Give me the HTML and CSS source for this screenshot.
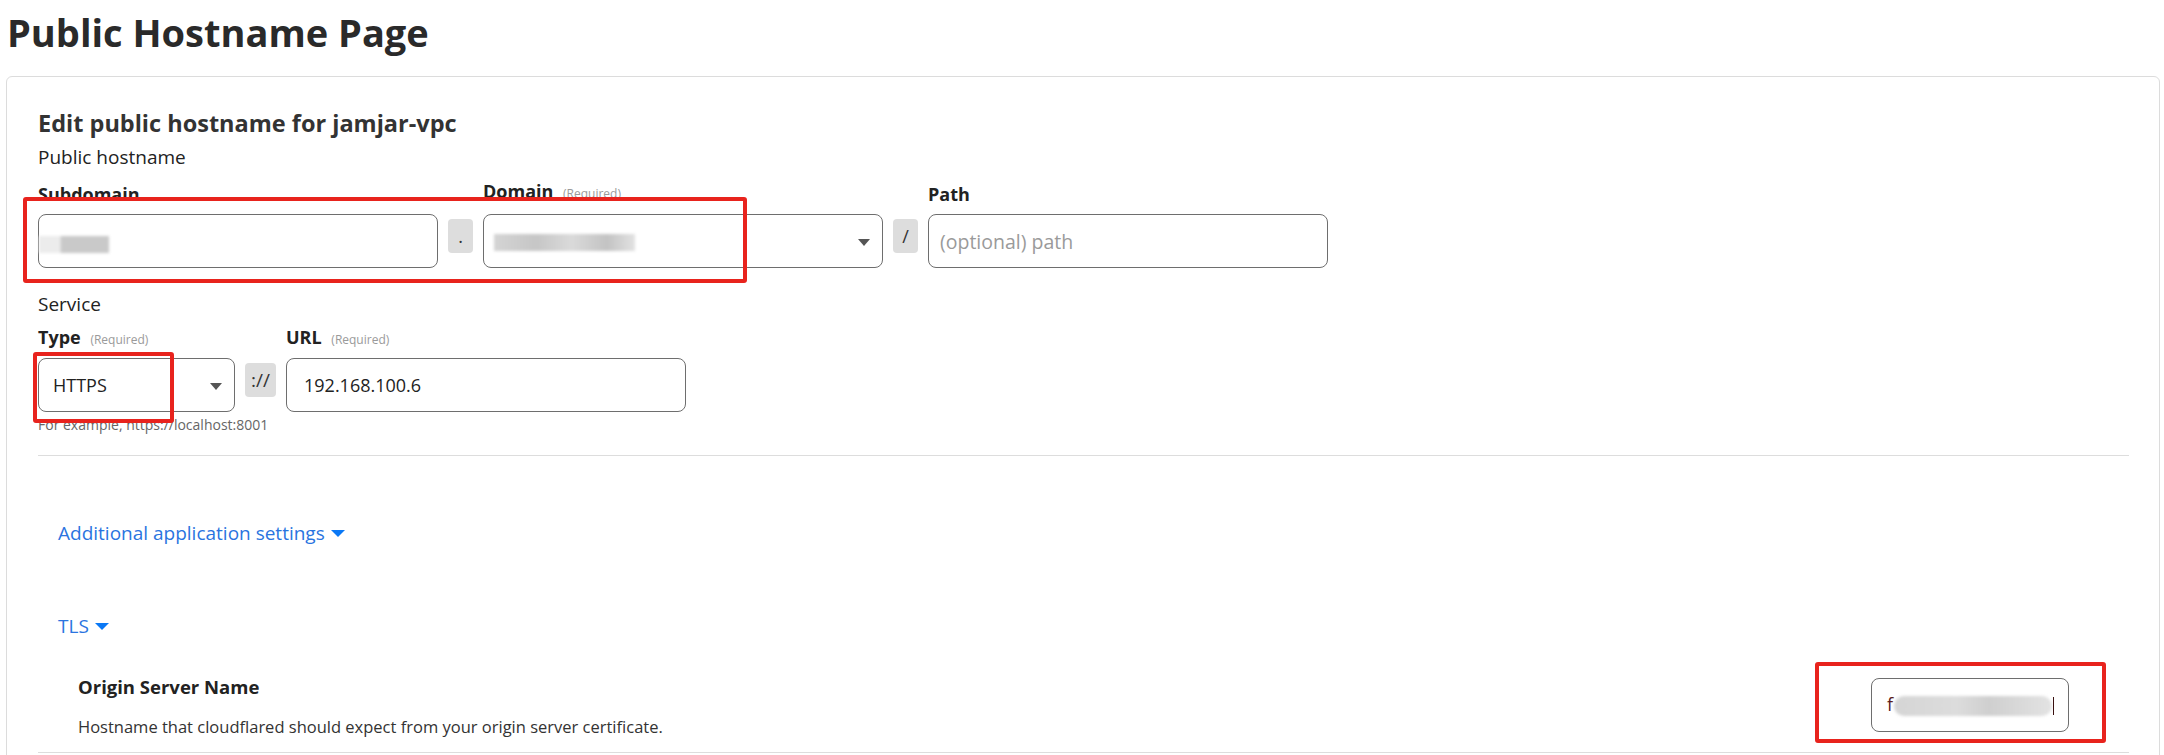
FILE: index.html
```html
<!DOCTYPE html>
<html lang="en">
<head>
<meta charset="utf-8">
<title>Public Hostname Page</title>
<link rel="stylesheet" href="styles.css">
</head>
<body>
<div class="page">
  <h1 class="page-title">Public Hostname Page</h1>
  <div class="card">
    <h4 class="card-title">Edit public hostname for jamjar-vpc</h4>
    <div class="group-label">Public hostname</div>
    <div class="field-row">
      <div class="field">
        <div class="field-label">Subdomain</div>
        <div class="input w400"><span class="blur blur-sub"></span></div>
      </div>
      <div class="sep">.</div>
      <div class="field">
        <div class="field-label">Domain <span class="req">(Required)</span></div>
        <div class="input select w400"><span class="blur blur-dom"></span><span class="caret"></span></div>
      </div>
      <div class="sep">/</div>
      <div class="field">
        <div class="field-label">Path</div>
        <div class="input w400"><span class="placeholder">(optional) path</span></div>
      </div>
    </div>

    <div class="group-label service">Service</div>
    <div class="field-row service-row">
      <div class="field">
        <div class="field-label">Type <span class="req">(Required)</span></div>
        <div class="input select w197"><span class="value">HTTPS</span><span class="caret"></span></div>
      </div>
      <div class="sep wide">://</div>
      <div class="field">
        <div class="field-label">URL <span class="req">(Required)</span></div>
        <div class="input w400"><span class="value url">192.168.100.6</span></div>
      </div>
    </div>
    <div class="help">For example, https://localhost:8001</div>

    <hr class="divider">

    <div class="toggle additional">Additional application settings<span class="tri"></span></div>
    <div class="toggle tls">TLS<span class="tri"></span></div>

    <div class="setting-row">
      <div class="setting-text">
        <div class="setting-name">Origin Server Name</div>
        <div class="setting-desc">Hostname that cloudflared should expect from your origin server certificate.</div>
      </div>
      <div class="input w198 origin"><span class="blur blur-origin"></span><span class="f-mark">f</span><span class="l-mark"></span></div>
    </div>
  </div>

  <div class="mark mark-1"></div>
  <div class="mark mark-2"></div>
  <div class="mark mark-3"></div>
</div>
</body>
</html>
```

FILE: styles.css
```css
* { box-sizing: border-box; }

html, body {
  margin: 0;
  padding: 0;
  background: #ffffff;
}

body {
  font-family: "Open Sans", "Noto Sans", sans-serif;
  color: #333333;
  overflow: hidden;
}

.page {
  position: relative;
  padding: 8px 4px 0 6px;
}

.page-title {
  margin: 0 0 20px 1px;
  font-size: 38px;
  line-height: 48px;
  font-weight: 700;
  color: #2a2a2a;
}

.card {
  border: 1px solid #dcdcdc;
  border-radius: 6px;
  padding: 32px 30px 0 31px;
  height: 720px;
}

.card-title {
  margin: 0;
  font-size: 23.5px;
  line-height: 28px;
  font-weight: 700;
  color: #333333;
}

.group-label {
  margin-top: 8px;
  font-size: 19px;
  line-height: 24px;
  color: #222222;
}

.group-label.service {
  margin-top: 24px;
}

.field-row {
  display: flex;
  align-items: flex-end;
  gap: 10px;
  margin-top: 10px;
}

.field-row.service-row {
  margin-top: 9px;
}

.field {
  display: flex;
  flex-direction: column;
}

.field-label {
  font-size: 18px;
  line-height: 24px;
  font-weight: 700;
  color: #222222;
  margin-bottom: 8px;
}

.service-row .field-label {
  margin-bottom: 6px;
}

.req {
  font-size: 12px;
  font-weight: 400;
  color: #9a9a9a;
  margin-left: 5px;
}

.input {
  position: relative;
  height: 54px;
  border: 1px solid #6e6e6e;
  border-radius: 8px;
  display: flex;
  align-items: center;
  padding: 0 14px;
  font-size: 18px;
  color: #222222;
}

.w400 { width: 400px; }
.w197 { width: 197px; }
.w198 { width: 198px; }

.value.url { padding-left: 3px; }

.placeholder {
  color: #9a9a9a;
  font-size: 19.5px;
  margin-left: -3px;
}

.caret {
  position: absolute;
  right: 12px;
  top: 24px;
  width: 0;
  height: 0;
  border-left: 6px solid transparent;
  border-right: 6px solid transparent;
  border-top: 7px solid #555555;
}

.sep {
  width: 25px;
  height: 34px;
  margin-bottom: 15px;
  background: #dddddd;
  border-radius: 4px;
  display: flex;
  align-items: center;
  justify-content: center;
  font-size: 18px;
  color: #333333;
}

.sep.wide {
  width: 31px;
  font-size: 19px;
}

.blur {
  display: block;
  position: absolute;
  background: #cfcfcf;
  filter: blur(1.5px);
}

.blur-sub {
  left: 0;
  top: 21px;
  width: 70px;
  height: 17px;
  background: linear-gradient(90deg, #ececec 0, #ececec 30%, #c9c9c9 32%, #c9c9c9 100%);
}

.blur-dom {
  left: 10px;
  top: 19px;
  width: 141px;
  height: 17px;
  background: linear-gradient(90deg, #d4d4d4 0, #c6c6c6 30%, #dadada 55%, #c3c3c3 80%, #e2e2e2 100%);
}

.blur-origin {
  left: 22px;
  top: 17px;
  width: 158px;
  height: 20px;
  border-radius: 10px;
  background: linear-gradient(90deg, #d5d5d5 0, #dcdcdc 40%, #cfcfcf 60%, #e3e3e3 100%);
}

.f-mark {
  position: absolute;
  left: 15px;
  top: 13px;
  font-size: 18px;
  color: #5a1d1d;
}

.l-mark {
  position: absolute;
  left: 181px;
  top: 18px;
  width: 1px;
  height: 18px;
  background: #3a1010;
}

.help {
  margin-top: 5px;
  font-size: 14px;
  line-height: 16px;
  color: #666666;
}

.divider {
  margin: 22px 0 0 0;
  border: 0;
  border-top: 1px solid #dddddd;
  height: 0;
}

.toggle {
  display: flex;
  align-items: center;
  padding-left: 20px;
  font-size: 19px;
  line-height: 24px;
  color: #2a74e0;
}

.toggle.additional { margin-top: 65px; }
.toggle.tls { margin-top: 69px; }

.tri {
  width: 0;
  height: 0;
  margin-left: 6px;
  border-left: 7px solid transparent;
  border-right: 7px solid transparent;
  border-top: 7px solid #0a78f5;
}

.setting-row {
  margin-top: 37px;
  display: flex;
  align-items: flex-start;
  justify-content: space-between;
  padding: 0 60px 14px 40px;
  border-bottom: 1px solid #dddddd;
}

.setting-name {
  font-size: 18.5px;
  line-height: 24px;
  font-weight: 700;
  color: #222222;
}

.setting-desc {
  margin-top: 17px;
  font-size: 16.5px;
  line-height: 22px;
  color: #333333;
}

.input.origin {
  margin-top: 3px;
}

.mark {
  position: absolute;
  border: 4px solid #e8231d;
  border-radius: 3px;
}

.mark-1 { left: 23px; top: 197px; width: 724px; height: 86px; }
.mark-2 { left: 33px; top: 352px; width: 141px; height: 71px; }
.mark-3 { left: 1815px; top: 662px; width: 291px; height: 81px; }
```
